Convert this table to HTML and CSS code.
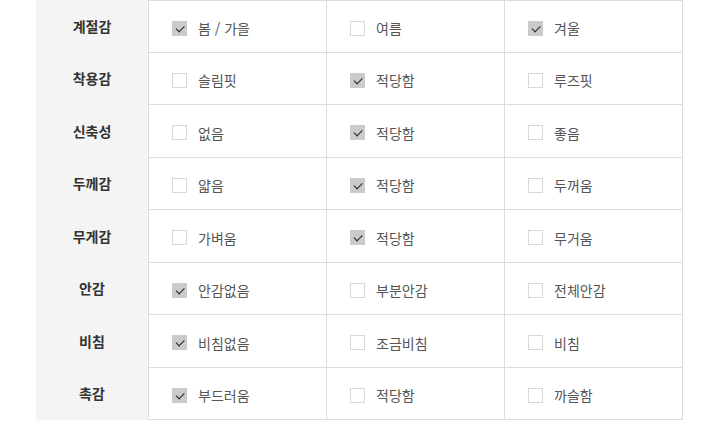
FILE: index.html
```html
<!DOCTYPE html>
<html lang="ko">
<head>
<meta charset="utf-8">
<link rel="stylesheet" href="styles.css">
</head>
<body>
<div class="spec">
  <div class="row">
    <div class="head">계절감</div>
    <div class="cell"><span class="box on"></span><span class="label">봄 / 가을</span></div>
    <div class="cell"><span class="box"></span><span class="label">여름</span></div>
    <div class="cell"><span class="box on"></span><span class="label">겨울</span></div>
  </div>
  <div class="row">
    <div class="head">착용감</div>
    <div class="cell"><span class="box"></span><span class="label">슬림핏</span></div>
    <div class="cell"><span class="box on"></span><span class="label">적당함</span></div>
    <div class="cell"><span class="box"></span><span class="label">루즈핏</span></div>
  </div>
  <div class="row">
    <div class="head">신축성</div>
    <div class="cell"><span class="box"></span><span class="label">없음</span></div>
    <div class="cell"><span class="box on"></span><span class="label">적당함</span></div>
    <div class="cell"><span class="box"></span><span class="label">좋음</span></div>
  </div>
  <div class="row">
    <div class="head">두께감</div>
    <div class="cell"><span class="box"></span><span class="label">얇음</span></div>
    <div class="cell"><span class="box on"></span><span class="label">적당함</span></div>
    <div class="cell"><span class="box"></span><span class="label">두꺼움</span></div>
  </div>
  <div class="row">
    <div class="head">무게감</div>
    <div class="cell"><span class="box"></span><span class="label">가벼움</span></div>
    <div class="cell"><span class="box on"></span><span class="label">적당함</span></div>
    <div class="cell"><span class="box"></span><span class="label">무거움</span></div>
  </div>
  <div class="row">
    <div class="head">안감</div>
    <div class="cell"><span class="box on"></span><span class="label">안감없음</span></div>
    <div class="cell"><span class="box"></span><span class="label">부분안감</span></div>
    <div class="cell"><span class="box"></span><span class="label">전체안감</span></div>
  </div>
  <div class="row">
    <div class="head">비침</div>
    <div class="cell"><span class="box on"></span><span class="label">비침없음</span></div>
    <div class="cell"><span class="box"></span><span class="label">조금비침</span></div>
    <div class="cell"><span class="box"></span><span class="label">비침</span></div>
  </div>
  <div class="row">
    <div class="head">촉감</div>
    <div class="cell"><span class="box on"></span><span class="label">부드러움</span></div>
    <div class="cell"><span class="box"></span><span class="label">적당함</span></div>
    <div class="cell"><span class="box"></span><span class="label">까슬함</span></div>
  </div>
</div>
</body>
</html>
```

FILE: styles.css
```css
html, body {
  margin: 0;
  padding: 0;
  background: #fff;
}
body {
  font-family: "Noto Sans CJK KR", "Noto Sans", sans-serif;
  color: #555;
}
.spec {
  margin-left: 36px;
  width: 647px;
}
.row {
  display: grid;
  grid-template-columns: 112px 179px 178px 178px;
  height: 52.5px;
}
.head {
  background: #f4f4f4;
  display: flex;
  align-items: center;
  justify-content: center;
  font-size: 14px;
  font-weight: bold;
  color: #333;
  padding-bottom: 1px;
}
.cell {
  display: flex;
  align-items: center;
  padding-left: 23px;
  padding-top: 4px;
  border-right: 1px solid #dcdcdc;
  border-bottom: 1px solid #dcdcdc;
  box-sizing: border-box;
  font-size: 14px;
}
.head + .cell {
  border-left: 1px solid #dcdcdc;
}
.row:first-child .cell {
  border-top: 1px solid #dcdcdc;
}
.box {
  width: 15px;
  height: 15px;
  box-sizing: border-box;
  border: 1px solid #d8d8d8;
  background: #fff;
  margin-right: 11px;
  position: relative;
  flex: none;
}
.box.on {
  background: #cbcbcb;
  border-color: #cbcbcb;
}
.box.on::after {
  content: "";
  position: absolute;
  left: 3px;
  top: 2px;
  width: 7px;
  height: 3.5px;
  border-left: 1.6px solid #222;
  border-bottom: 1.6px solid #222;
  transform: rotate(-45deg) translate(-1px, 1px);
}
.label {
  line-height: 20px;
}
```
